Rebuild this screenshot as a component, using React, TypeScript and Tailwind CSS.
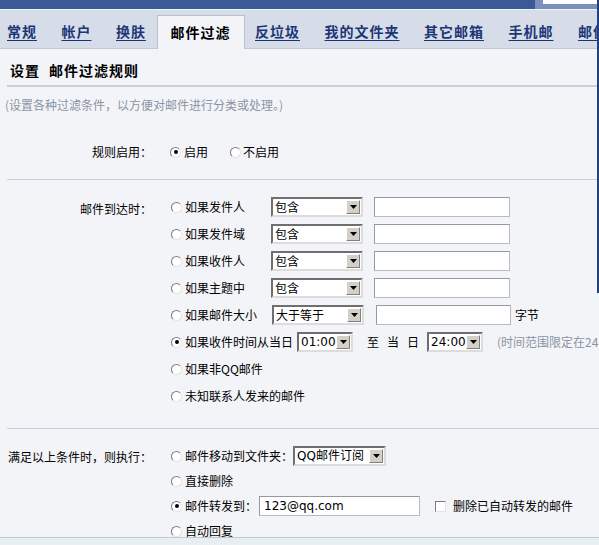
import React from "react";

const Radio = ({ checked }: { checked?: boolean }) => (
  <span className="relative inline-block w-[11px] h-[11px] shrink-0 rounded-full bg-white border border-t-[#7c7c7c] border-l-[#7c7c7c] border-r-[#e4e4e4] border-b-[#e4e4e4]">
    {checked && (
      <span className="absolute inset-0 m-auto w-[4px] h-[4px] rounded-full bg-black" />
    )}
  </span>
);

const Select = ({
  value,
  w,
  mono,
}: {
  value: string;
  w: string;
  mono?: boolean;
}) => (
  <div
    className={
      "flex items-center h-[20px] shrink-0 bg-white border-2 border-t-[#6f6f6f] border-l-[#6f6f6f] border-r-[#dcdcdc] border-b-[#dcdcdc] " +
      w
    }
  >
    <span
      className={
        "flex-1 pl-[2px] leading-[16px] whitespace-nowrap overflow-hidden " +
        (mono ? "font-['DejaVu_Sans','Noto_Sans_CJK_SC',sans-serif] text-[12px]" : "")
      }
    >
      {value}
    </span>
    <span className="flex items-center justify-center w-[14px] h-[14px] mr-[1px] bg-[#d4d0c8] border border-t-white border-l-white border-r-[#808080] border-b-[#808080]">
      <svg width="7" height="4" viewBox="0 0 7 4">
        <path d="M0 0H7L3.5 4Z" fill="#000" />
      </svg>
    </span>
  </div>
);

const Input = ({ w, value }: { w: string; value?: string }) => (
  <div
    className={
      "h-[20px] shrink-0 bg-white border border-[#b6bcc4] border-t-[#939aa4] border-l-[#939aa4] flex items-center pl-[4px] font-['DejaVu_Sans',sans-serif] text-[12px] " +
      w
    }
  >
    {value}
  </div>
);

const Tab = ({ label, active }: { label: string; active?: boolean }) =>
  active ? (
    <div className="h-[34px] -mb-[1px] -mx-[14px] px-[13px] flex items-center bg-[#f3f4f8] border-x border-t border-[#b9c0ce] text-black no-underline">
      {label}
    </div>
  ) : (
    <div className="h-[33px] flex items-center">
      <span className="text-[#1c3676] underline underline-offset-[3px] decoration-[1px]">
        {label}
      </span>
    </div>
  );

export default function App() {
  return (
    <div className="relative w-[599px] h-[545px] overflow-hidden bg-[#f3f4f8] font-['Noto_Sans_CJK_SC',sans-serif] text-[12px] text-black">
      {/* top bar */}
      <div className="relative h-[9px] bg-[#3b5897]">
        <div className="absolute right-0 top-0 w-[64px] h-[9px] bg-[#7b90bb]">
          <div className="absolute left-[8px] top-0 right-0 h-[4px] bg-white" />
        </div>
      </div>
      <div className="h-[1px] bg-[#eef1f6]" />

      {/* tabs */}
      <div className="h-[39px] bg-[#d6dde9] border-b border-[#c3c9d6] flex items-end pl-[7px] gap-[24.5px] whitespace-nowrap text-[14px] font-bold tracking-[1px]">
        <Tab label="常规" />
        <Tab label="帐户" />
        <Tab label="换肤" />
        <Tab label="邮件过滤" active />
        <Tab label="反垃圾" />
        <Tab label="我的文件夹" />
        <Tab label="其它邮箱" />
        <Tab label="手机邮" />
        <Tab label="邮件提醒" />
      </div>

      {/* title */}
      <div className="h-[36px] pt-[7px] pl-[10px] flex items-center text-[14px] font-bold tracking-[1px] whitespace-nowrap">
        <span>设置</span>
        <span className="ml-[9px]">邮件过滤规则</span>
      </div>
      <div className="h-[2px] ml-[7px] bg-[#c9ceda]" />

      <div className="mt-[9px] h-[18px] leading-[18px] pl-[5px] text-[#8a94a6] whitespace-nowrap">
        (设置各种过滤条件，以方便对邮件进行分类或处理。)
      </div>

      {/* section 1 */}
      <div className="mt-[28px] flex h-[20px] items-center whitespace-nowrap">
        <div className="w-[152px] shrink-0 text-right">规则启用：</div>
        <div className="ml-[18px] flex items-center">
          <Radio checked />
          <span className="ml-[3px]">启用</span>
          <span className="ml-[22px]" />
          <Radio />
          <span className="ml-[2px]">不启用</span>
        </div>
      </div>
      <div className="mt-[17px] h-[1px] ml-[7px] bg-[#c9ceda]" />

      {/* section 2 */}
      <div className="mt-[17px] flex whitespace-nowrap">
        <div className="w-[152px] shrink-0 text-right h-[20px] leading-[20px] pt-[2px]">
          邮件到达时：
        </div>
        <div className="ml-[19px] flex flex-col gap-[7px]">
          {["如果发件人", "如果发件域", "如果收件人", "如果主题中"].map((t) => (
            <div key={t} className="flex items-center h-[20px]">
              <Radio />
              <span className="ml-[3px] w-[86px]">{t}</span>
              <Select value="包含" w="w-[92px]" />
              <span className="w-[11px]" />
              <Input w="w-[136px]" />
            </div>
          ))}
          <div className="flex items-center h-[20px]">
            <Radio />
            <span className="ml-[3px] w-[87px]">如果邮件大小</span>
            <Select value="大于等于" w="w-[92px]" />
            <span className="w-[12px]" />
            <Input w="w-[135px]" />
            <span className="ml-[4px]">字节</span>
          </div>
          <div className="flex items-center h-[20px]">
            <Radio checked />
            <span className="ml-[3px]">如果收件时间从当日</span>
            <span className="w-[4px]" />
            <Select value="01:00" w="w-[56px]" mono />
            <span className="ml-[14px] flex gap-[8px]">
              <span>至</span>
              <span>当</span>
              <span>日</span>
            </span>
            <span className="w-[8px]" />
            <Select value="24:00" w="w-[56px]" mono />
            <span className="ml-[14px] text-[#8a94a6]">(时间范围限定在24小时内)</span>
          </div>
          <div className="flex items-center h-[20px]">
            <Radio />
            <span className="ml-[3px]">如果非QQ邮件</span>
          </div>
          <div className="flex items-center h-[20px]">
            <Radio />
            <span className="ml-[3px]">未知联系人发来的邮件</span>
          </div>
        </div>
      </div>
      <div className="mt-[22px] h-[1px] ml-[7px] bg-[#c9ceda]" />

      {/* section 3 */}
      <div className="h-[108px] overflow-hidden pt-[17px] flex whitespace-nowrap">
        <div className="w-[152px] shrink-0 text-right h-[20px] leading-[20px] pt-[1px]">
          满足以上条件时，则执行：
        </div>
        <div className="ml-[19px] flex flex-col gap-[6px]">
          <div className="flex items-center h-[20px]">
            <Radio />
            <span className="ml-[3px]">邮件移动到文件夹：</span>
            <Select value="QQ邮件订阅" w="w-[93px]" mono />
          </div>
          <div className="flex items-center h-[20px]">
            <Radio />
            <span className="ml-[3px]">直接删除</span>
          </div>
          <div className="flex items-center h-[20px]">
            <Radio checked />
            <span className="ml-[3px]">邮件转发到：</span>
            <span className="w-[2px]" />
            <Input w="w-[161px]" value="123@qq.com" />
            <span className="ml-[15px] w-[11px] h-[11px] bg-white border border-t-[#7c7c7c] border-l-[#7c7c7c] border-r-[#e4e4e4] border-b-[#e4e4e4]" />
            <span className="ml-[7px]">删除已自动转发的邮件</span>
          </div>
          <div className="flex items-center h-[20px]">
            <Radio />
            <span className="ml-[3px]">自动回复</span>
          </div>
        </div>
      </div>
      <div className="h-[1px] bg-[#b9ccd3]" />
      <div className="h-[7px] bg-[#e8eef2]" />

      {/* right edge line */}
      <div className="absolute left-[597px] top-0 w-[2px] h-[293px] bg-[#1f417d]" />
    </div>
  );
}
